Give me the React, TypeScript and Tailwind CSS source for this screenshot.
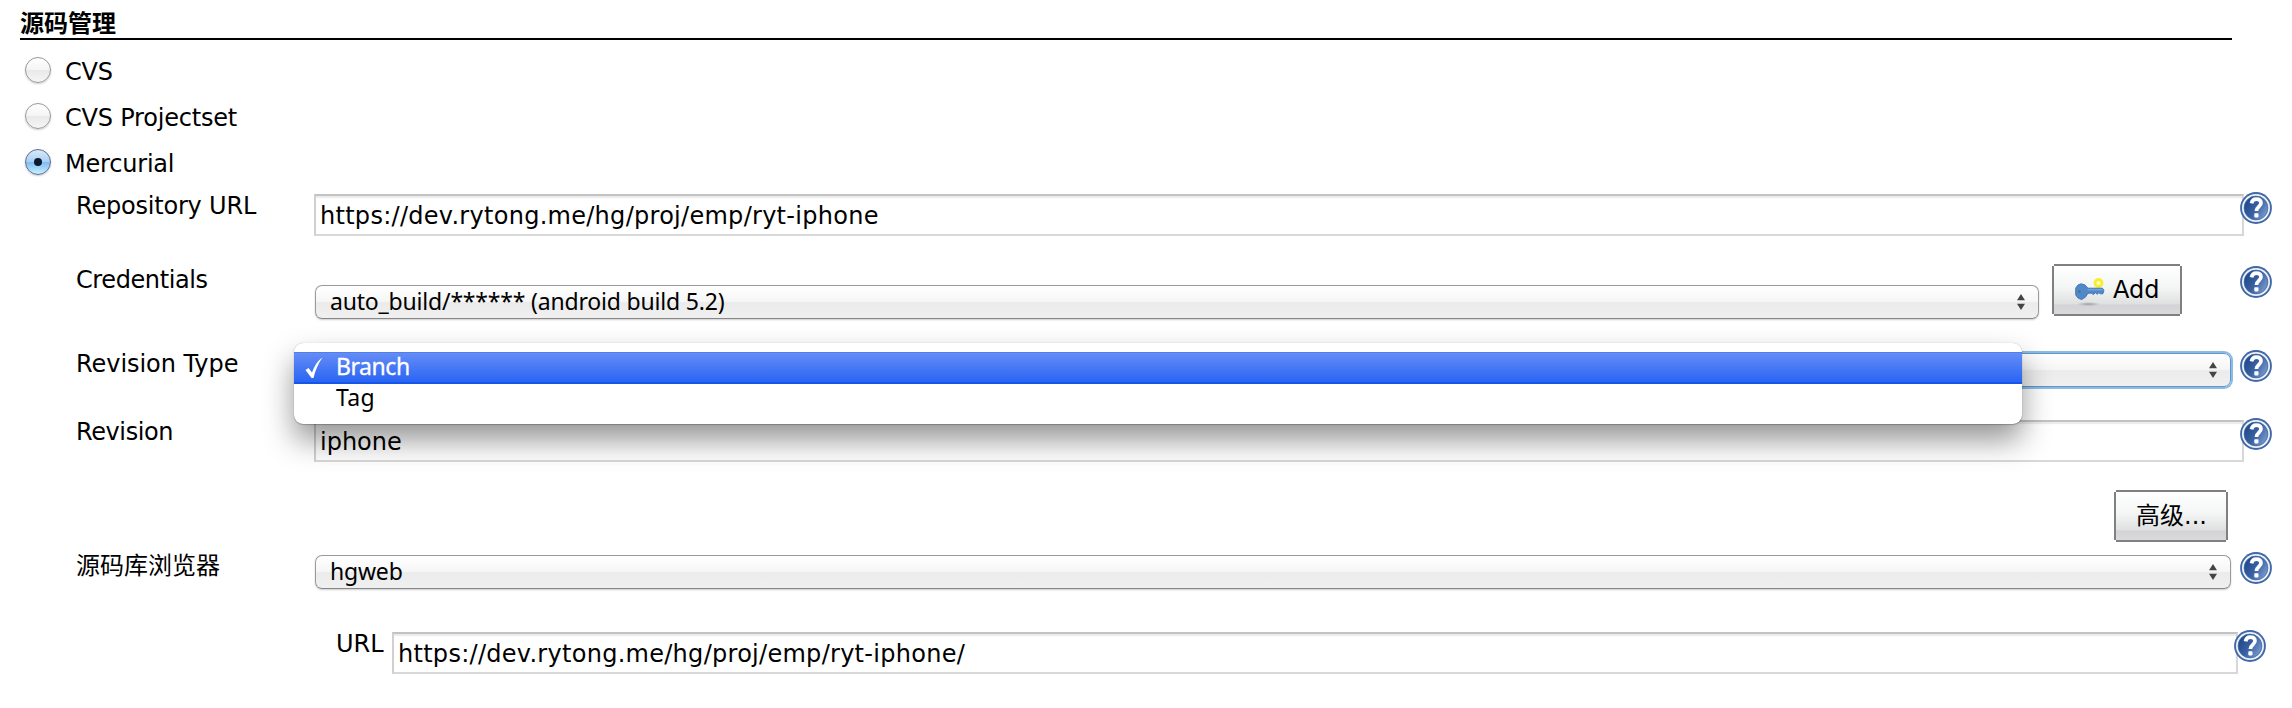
import React from "react";

const label = "font-['DejaVu_Sans','Noto_Sans_CJK_SC',sans-serif] text-[24px] leading-[28px] whitespace-pre";

function HelpIcon({ className = "" }: { className?: string }) {
  return (
    <svg viewBox="0 0 32 32" className={`relative block h-8 w-8 shrink-0 ${className}`}>
      <defs>
        <linearGradient id="help" x1="0" y1="0.2" x2="1" y2="0.8">
          <stop offset="0" stopColor="#1c4588" />
          <stop offset="0.5" stopColor="#3a62a2" />
          <stop offset="1" stopColor="#7f9fd0" />
        </linearGradient>
      </defs>
      <circle cx="16" cy="16" r="15.900" fill="#4168a6" />
      <circle cx="16" cy="16" r="14" fill="#eef2f8" />
      <circle cx="16" cy="16" r="11.900" fill="url(#help)" stroke="#3f66a4" strokeWidth="0.8" />
      <path d="M11.500 11.400C12 8.500 13.800 7.200 16.200 7.200c3 0 4.800 1.500 4.800 3.900 0 3.400-4.600 3.700-4.600 7.900" fill="none" stroke="#fff" strokeWidth="3.700" />
      <rect x="14.300" y="21.200" width="4.200" height="4.200" rx="0.800" fill="#fff" />
    </svg>
  );
}

function Arrows() {
  return (
    <svg viewBox="0 0 8 16" className="h-4 w-2 shrink-0">
      <path d="M4 0 8 6.300H0zM4 16 8 9.700H0z" fill="#444" />
    </svg>
  );
}

function Select({ text, focus = false, className = "" }: { text: string; focus?: boolean; className?: string }) {
  return (
    <div
      className={`flex h-[34px] items-center justify-between rounded-[7px] border bg-[linear-gradient(#ffffff,#f6f6f6_48%,#ebebeb_52%,#f0f0f0)] pr-[13px] pl-[14px] ${
        focus ? "border-[#5c97cf] shadow-[0_0_0_2px_#8fbbe3]" : "border-[#9a9a9a] border-b-[#868686] shadow-[0_1px_2px_rgba(0,0,0,0.2)]"
      } ${className}`}
    >
      <span className="mb-[2px] font-['Noto_Sans',sans-serif] text-[23px] leading-[30px] tracking-[-0.19px] whitespace-pre">{text}</span>
      <Arrows />
    </div>
  );
}

function Input({ text, tracking = "", className = "" }: { text: string; tracking?: string; className?: string }) {
  return (
    <div
      className={`h-[42px] border-2 border-[#d8d8d8] border-t-[#c2c2c2] border-l-[#d0d0d0] bg-white pt-[6px] pl-1 shadow-[inset_0_2px_1px_#ececec] ${className}`}
    >
      <div className={`${label} ${tracking}`}>{text}</div>
    </div>
  );
}

function Button({ children, className = "" }: { children: React.ReactNode; className?: string }) {
  return (
    <div
      className={`flex h-12 shrink-0 items-center bg-[linear-gradient(#ffffff,#f4f5f5_45%,#dfe0e0_79%,#d3d3d6_81%,#dadadd)] shadow-[0_-2px_#808080,0_2px_#808080,2px_0_#808080,-2px_0_#808080] ${className}`}
    >
      {children}
    </div>
  );
}

function KeyIcon() {
  return (
    <svg viewBox="0 0 32 32" className="h-8 w-8 shrink-0">
      <defs>
        <radialGradient id="keyShadow">
          <stop offset="0" stopColor="#000" stopOpacity="0.280" />
          <stop offset="1" stopColor="#000" stopOpacity="0" />
        </radialGradient>
      </defs>
      <ellipse cx="14.500" cy="30" rx="12" ry="2" fill="url(#keyShadow)" />
      <circle cx="24.500" cy="9" r="3.500" fill="#fffcc8" stroke="#f9ee2c" strokeWidth="2.800" />
      <path d="M4 11 7 9.800l3.800 1L14 14.200h14.500l1.400 2.300-1 3.300h-2.600l-1.400-1.100-1.700 1.600-1.900-1.600-1.900 1.900-2-1.400H14l-2.600 4L7.500 25.600 4 24 1.700 21V14z" fill="#5088c8" stroke="#3f72b2" strokeWidth="0.900" strokeLinejoin="round" />
      <path d="M13.500 15.800h15" stroke="#7fa9dc" strokeWidth="1.100" />
      <circle cx="5.300" cy="17.500" r="1.500" fill="#5b6f86" />
    </svg>
  );
}

function Radio({ text, checked = false }: { text: string; checked?: boolean }) {
  return (
    <div className="flex h-[46px] items-center pl-[25px]">
      <div
        className={`flex h-[26px] w-[26px] items-center justify-center rounded-full border shadow-[0_1px_2px_rgba(0,0,0,0.2)] ${
          checked
            ? "border-[#5f6a8c] bg-[linear-gradient(#d8eafb,#a9d0f5_48%,#7fbdf2_52%,#c8f0ff)]"
            : "border-[#999] bg-[linear-gradient(#ffffff,#f5f5f5_48%,#e9e9e9_52%,#f6f6f6)]"
        }`}
      >
        {checked && <div className="h-2 w-2 rounded-full bg-[#0b1a2e]" />}
      </div>
      <span className={`${label} pt-[3px] pl-[14px] tracking-[-0.2px]`}>{text}</span>
    </div>
  );
}

function Row({ name, tracking = "tracking-[-0.2px]", className, children }: { name: string; tracking?: string; className: string; children: React.ReactNode }) {
  return (
    <div className={`flex items-start ${className}`}>
      <div className={`${label} ${tracking} w-[314px] shrink-0 pl-[76px]`}>{name}</div>
      {children}
    </div>
  );
}

function Menu() {
  return (
    <div className="absolute top-[-7px] left-[-20px] h-[81px] w-[1728px] rounded-[9px] bg-white pt-[9px] font-['Noto_Sans',sans-serif] text-[23px] leading-[32px] shadow-[0_0_1px_rgba(0,0,0,0.3),0_1px_1px_rgba(0,0,0,0.2),0_16px_30px_rgba(0,0,0,0.42)]">
      <div className="flex h-8 items-center border-t border-b-2 border-t-[#4f7fe8] border-b-[#1556ea] bg-[linear-gradient(#658cf6,#2965f3)] pl-[11px] text-white">
        <svg viewBox="0 0 18 22" className="h-[22px] w-[18px]">
          <path d="M.5 13 3.500 11l3.500 4.500C9.500 9 12 4.500 17.500.5 13 7 10.500 13 8.500 21H6.500z" fill="#fff" />
        </svg>
        <span className="mb-[4px] pl-[13px] tracking-[-0.45px] [-webkit-text-stroke:0.3px_white]">Branch</span>
      </div>
      <div className="h-8 pl-[42px] leading-[26px] tracking-[0.3px]">Tag</div>
    </div>
  );
}

export default function App() {
  return (
    <div className="h-[708px] w-[2292px] overflow-hidden bg-white text-black">
      <div className="ml-5 h-10 w-[2212px] border-b-2 border-black pt-[8px] font-['Noto_Sans_CJK_SC',sans-serif] text-[24px] leading-[28px] font-bold">
        源码管理
      </div>
      <div className="pt-[7px]">
        <Radio text="CVS" />
        <Radio text="CVS Projectset" />
        <Radio text="Mercurial" checked />
      </div>
      <div className="pt-[7px]">
        <Row name="Repository URL" className="h-[74px]">
          <Input text="https://dev.rytong.me/hg/proj/emp/ryt-iphone" tracking="tracking-[0.28px]" className="mt-[2px] w-[1930px]" />
          <HelpIcon className="-ml-1" />
        </Row>
        <Row name="Credentials" tracking="tracking-[-0.4px]" className="h-[84px]">
          <Select text="auto_build/****** (android build 5.2)" className="mt-[19px] ml-px w-[1724px]" />
          <Button className="ml-[15px] w-[126px] pl-5">
            <KeyIcon />
            <span className={`${label} pl-[7px]`}>Add</span>
          </Button>
          <HelpIcon className="ml-[60px]" />
        </Row>
        <Row name="Revision Type" tracking="tracking-[-0.05px]" className="h-[68px]">
          <div className="relative z-10 w-[1926px]">
            <Select text="" focus className="mt-[3px] ml-px w-[1916px]" />
            <Menu />
          </div>
          <HelpIcon />
        </Row>
        <Row name="Revision" tracking="tracking-[-0.4px]" className="h-[72px]">
          <Input text="iphone" className="mt-[2px] w-[1930px]" />
          <HelpIcon className="-ml-1" />
        </Row>
        <div className="flex h-[62px] justify-end pt-[2px] pr-[66px]">
          <Button className="w-[110px] pl-[20px]">
            <span className={label}>高级...</span>
          </Button>
        </div>
        <Row name="源码库浏览器" tracking="tracking-normal" className="h-[78px]">
          <Select text="hgweb" className="mt-[3px] ml-px w-[1916px]" />
          <HelpIcon className="ml-[9px]" />
        </Row>
        <div className="flex items-start pl-[336px]">
          <div className={`${label} w-[56px]`}>URL</div>
          <Input text="https://dev.rytong.me/hg/proj/emp/ryt-iphone/" tracking="tracking-[0.28px]" className="mt-[2px] w-[1846px]" />
          <HelpIcon className="-ml-1" />
        </div>
      </div>
    </div>
  );
}
